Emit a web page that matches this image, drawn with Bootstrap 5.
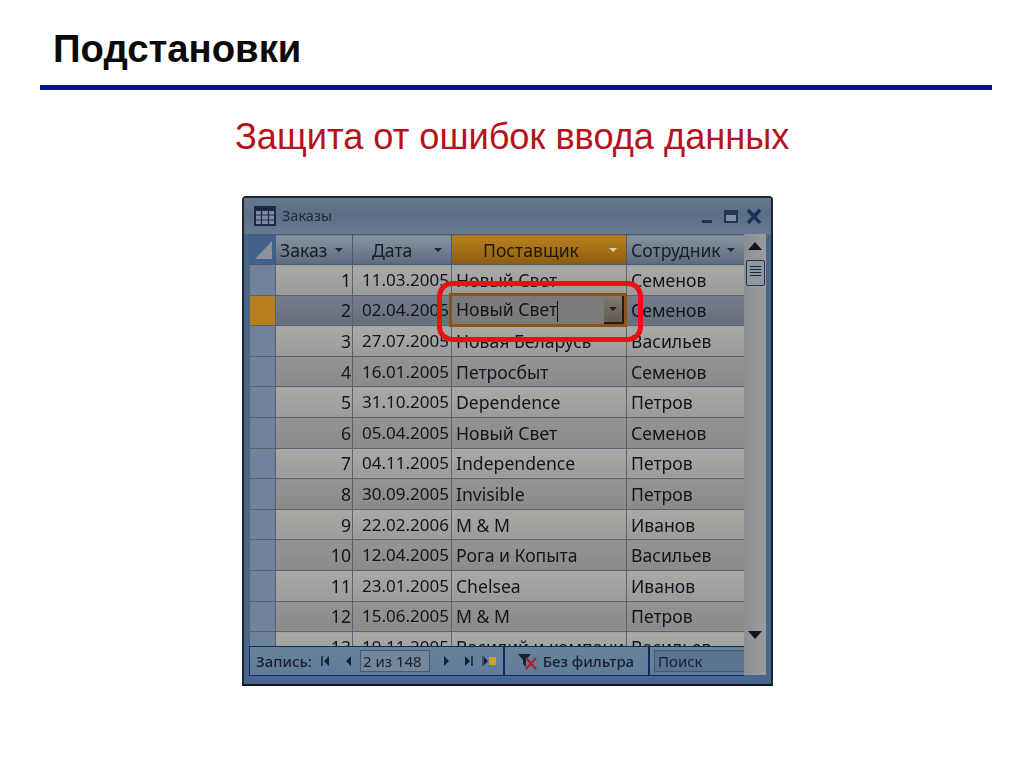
<!DOCTYPE html>
<html lang="ru">
<head>
  <meta charset="UTF-8" />
  <meta name="viewport" content="width=device-width, initial-scale=1" />
  <title>Подстановки</title>
  <link href="https://cdn.jsdelivr.net/npm/bootstrap@5.3.0/dist/css/bootstrap.min.css" rel="stylesheet">
  <style>
    body {
      background-color: #fff;
      font-family: "Liberation Sans", Arial, sans-serif;
      overflow: hidden;
    }
    .slide { width: 1024px; height: 767px; }
    .slide-title {
      font-size: 38.3px;
      font-weight: 700;
      line-height: 42px;
      color: #0b0b0b;
      margin: 0;
      padding: 28px 0 0 53px;
    }
    .slide-rule {
      height: 5px;
      margin: 15px 32px 0 40px;
      background-color: #0b1580;
    }
    .slide-sub {
      font-size: 36.2px;
      line-height: 40px;
      color: #b5121b;
      margin: 0;
      padding: 27px 0 0 235px;
    }
    .win {
      position: relative;
      width: 531px;
      height: 490px;
      margin: 39px 0 0 242px;
      background-color: #47668e;
      border: 2px solid #20262e;
      border-bottom-color: #0e1116;
      border-radius: 4px 4px 0 0;
      font-family: "Noto Sans", sans-serif;
      color: #10151d;
      filter: blur(0.4px);
    }
    .win-title {
      height: 36px;
      padding: 0 8px 0 10px;
      background: linear-gradient(#66798f, #5a6e85 45%, #667b92);
      font-size: 14.5px;
      color: #1e2a3a;
    }
    .win-title-text { padding-left: 2px; }
    .win-body { height: 442px; padding-left: 5px; }
    .grid-pane { width: 495px; }
    .grid-clip { height: 413px; overflow: hidden; }
    .grid {
      table-layout: fixed;
      width: 495px;
      margin: 0;
      border-collapse: collapse;
      font-size: 17.6px;
      line-height: 20px;
      --bs-table-bg: transparent;
      --bs-table-color: #10151d;
    }
    .grid th, .grid td {
      height: 30.6px;
      padding: 0 3px 0 4px;
      border: 1px solid #59626f;
      white-space: nowrap;
      overflow: hidden;
      vertical-align: middle;
    }
    .grid thead th {
      font-weight: 400;
      height: 30px;
      padding-right: 9px;
      background: linear-gradient(#87939f, #5c6b80);
      border-color: #4a5a70;
      color: #161d28;
    }
    .grid thead th.hd-active {
      background: linear-gradient(#b9811f, #8d5c0e);
      color: #20160a;
    }
    .grid thead th.hd-corner { background: #3f618b; padding: 0; }
    .grid td.sel { background-color: #6e8299; padding: 0; }
    .grid td.sel-on { background-color: #b5801c; }
    .grid td.num { text-align: right; padding-right: 1px; }
    .grid td.date { font-size: 17px; padding-left: 9px; padding-right: 0; }
    .grid tr.r-a td:not(.sel) { background: linear-gradient(#a9a9a6, #9b9b9a); }
    .grid tr.r-b td:not(.sel) { background: linear-gradient(#949493, #8a8a8b); }
    .grid tr.r-on td:not(.sel) { background: linear-gradient(#767d8b, #666e7c); }
    .grid tr.r-on td.cell-edit { background: #7b7b7a; }
    .hd-row { display: flex; align-items: center; justify-content: space-between; }
    .hd-date { padding-left: 15px; }
    .hd-supplier { padding-left: 27px; }
    .arrow-d {
      width: 0; height: 0; flex-shrink: 0;
      border-left: 4px solid transparent;
      border-right: 4px solid transparent;
      border-top: 4px solid #1c2430;
    }
    .arrow-l { border-top-color: #d8d2c0; }
    .caret-bar { display: inline-block; width: 1px; height: 21px; background: #10151d; vertical-align: middle; }
    .stat-bar {
      height: 30px;
      border: 1px solid #16275a;
      border-right: 0;
      background: linear-gradient(#688499, #5f7b9c);
      font-size: 15px;
      color: #16202e;
      font-weight: 500;
    }
    .stat-sec { height: 100%; padding: 0 6px; border-right: 2px solid #16275a; }
    .rec-box {
      width: 70px; height: 22px; padding-left: 2px; line-height: 20px;
      border: 1px solid #3d5c85;
      background-color: #76869a;
      font-weight: 400;
    }
    .find-box {
      width: 90px; height: 22px; padding-left: 3px; line-height: 20px;
      border: 1px solid #3d5c85;
      border-right: 0;
      background-color: #5a7391;
      font-weight: 400;
    }
    .scroll-col {
      width: 22px;
      height: 441px;
      background: linear-gradient(90deg, #8b8f94, #9a9c9e);
    }
    .scroll-thumb {
      width: 19px; height: 26px; margin: 10px auto 0;
      border: 1.5px solid #2a3240;
      border-radius: 2px;
      background: #8f98a5;
      padding: 5px 3px 0;
    }
    .scroll-thumb i { display: block; height: 1px; margin-bottom: 2px; background: #1c2430; }
    .red-frame {
      position: absolute;
      left: 193px;
      top: 83px;
      width: 206px;
      height: 61px;
      border: 5px solid #f20d14;
      border-radius: 15px;
    }
    .edit-frame {
      position: absolute;
      left: 205px;
      top: 95px;
      width: 178px;
      height: 34px;
      border: 3px solid #8a5418;
    }
    .drop-btn {
      position: absolute;
      right: 0; top: 0;
      width: 20px; height: 28px;
      background: linear-gradient(#807a6e, #625c50);
      border-right: 2px solid #221d12;
      border-bottom: 2px solid #221d12;
      display: flex; align-items: center; justify-content: center;
    }
  </style>
</head>
<body>

<div class="slide">
  <h1 class="slide-title">Подстановки</h1>
  <div class="slide-rule"></div>
  <p class="slide-sub">Защита от ошибок ввода данных</p>

  <div class="win">
    <div class="win-title d-flex align-items-center gap-1">
      <svg width="22" height="20" viewBox="0 0 22 20"><rect x="1" y="1" width="20" height="18" fill="#7d8ea3" stroke="#1a2a44" stroke-width="2"/><rect x="1" y="1" width="20" height="4" fill="#1a2a44"/><path d="M1 9h20M1 14h20M7.5 1v18M14.5 1v18" stroke="#1a2a44" stroke-width="1.2"/></svg>
      <span class="win-title-text flex-grow-1">Заказы</span>
      <svg width="70" height="16" viewBox="0 0 70 16">
        <rect x="9" y="12" width="10" height="3" fill="#1f3552"/>
        <path d="M32 3h12v11H32z" fill="#7d8ea3" stroke="#1f3552" stroke-width="2"/><rect x="32" y="3" width="12" height="4" fill="#1f3552"/>
        <path d="M55 2l12 13M67 2L55 15" stroke="#1a2f55" stroke-width="3.4"/>
      </svg>
    </div>

    <div class="win-body d-flex">
      <div class="grid-pane d-flex flex-column">
        <div class="grid-clip">
          <table class="table grid">
            <colgroup>
              <col style="width:26px"><col style="width:77px"><col style="width:99px"><col style="width:175px"><col style="width:118px">
            </colgroup>
            <thead>
              <tr>
                <th class="hd-corner"><svg class="d-block mx-auto" width="20" height="22" viewBox="0 0 20 22"><path d="M19 2v18H2z" fill="#8b929c"/></svg></th>
                <th><div class="hd-row"><span>Заказ</span><span class="arrow-d"></span></div></th>
                <th><div class="hd-row"><span class="hd-date">Дата</span><span class="arrow-d"></span></div></th>
                <th class="hd-active"><div class="hd-row"><span class="hd-supplier">Поставщик</span><span class="arrow-d arrow-l"></span></div></th>
                <th><div class="hd-row"><span>Сотрудник</span><span class="arrow-d"></span></div></th>
              </tr>
            </thead>
            <tbody id="rows"></tbody>
          </table>
        </div>
        <div class="stat-bar d-flex align-items-center">
          <div class="stat-sec d-flex align-items-center gap-2" style="width:258px">
            <span>Запись:</span>
            <svg width="32" height="12" viewBox="0 0 32 12"><path d="M2 1v10" stroke="#16202e" stroke-width="1.5"/><path d="M9 1v10L4 6zM31 1v10l-5-5z" fill="#16202e"/></svg>
            <span class="rec-box">2 из 148</span>
            <svg width="58" height="12" viewBox="0 0 58 12"><path d="M6 1v10l5-5zM27 1v10l5-5z" fill="#16202e"/><path d="M34 1v10" stroke="#16202e" stroke-width="1.5"/><path d="M46 2v8l4-4z" fill="#16202e"/><path d="M45 1v10" stroke="#16202e"/><rect x="51" y="2" width="7" height="8" fill="#c9a02a"/></svg>
          </div>
          <div class="stat-sec d-flex align-items-center gap-1" style="width:147px;padding-left:12px">
            <svg width="22" height="18" viewBox="0 0 22 18"><path d="M1 2h13L9 8v7L6 12V8z" fill="#1a2232"/><path d="M9 6l10 11M19 6L9 17" stroke="#a8232c" stroke-width="2.5"/></svg>
            <span style="white-space:nowrap">Без фильтра</span>
          </div>
          <div class="ps-1"><div class="find-box">Поиск</div></div>
        </div>
      </div>
      <div class="scroll-col d-flex flex-column align-items-center">
        <svg class="mt-2" width="14" height="8" viewBox="0 0 14 8"><path d="M7 0l7 8H0z" fill="#10151d"/></svg>
        <div class="scroll-thumb"><i></i><i></i><i></i><i></i></div>
        <svg style="margin-top:345px" width="14" height="8" viewBox="0 0 14 8"><path d="M0 0h14L7 8z" fill="#10151d"/></svg>
      </div>
    </div>

    <div class="edit-frame"><span class="drop-btn"><span class="arrow-d"></span></span></div>
    <div class="red-frame"></div>
  </div>
</div>

<script src="https://cdn.jsdelivr.net/npm/bootstrap@5.3.0/dist/js/bootstrap.bundle.min.js"></script>
<script>
  const orders = [
    [1, "11.03.2005", "Новый Свет", "Семенов"],
    [2, "02.04.2005", "Новый Свет", "Семенов"],
    [3, "27.07.2005", "Новая Беларусь", "Васильев"],
    [4, "16.01.2005", "Петросбыт", "Семенов"],
    [5, "31.10.2005", "Dependence", "Петров"],
    [6, "05.04.2005", "Новый Свет", "Семенов"],
    [7, "04.11.2005", "Independence", "Петров"],
    [8, "30.09.2005", "Invisible", "Петров"],
    [9, "22.02.2006", "M & M", "Иванов"],
    [10, "12.04.2005", "Рога и Копыта", "Васильев"],
    [11, "23.01.2005", "Chelsea", "Иванов"],
    [12, "15.06.2005", "M & M", "Петров"],
    [13, "19.11.2005", "Василий и компания", "Васильев"]
  ];

  document.getElementById("rows").innerHTML = orders.map(o => {
    const on = o[0] === 2;
    const cls = on ? "r-on" : (o[0] % 2 ? "r-a" : "r-b");
    const supplier = on ? `${o[2]}<span class="caret-bar"></span>` : o[2].replace("&", "&amp;");
    return `<tr class="${cls}">
      <td class="sel${on ? " sel-on" : ""}"></td>
      <td class="num">${o[0]}</td>
      <td class="date">${o[1]}</td>
      <td${on ? ' class="cell-edit"' : ""}>${supplier}</td>
      <td>${o[3]}</td>
    </tr>`;
  }).join("");
</script>
</body>
</html>
